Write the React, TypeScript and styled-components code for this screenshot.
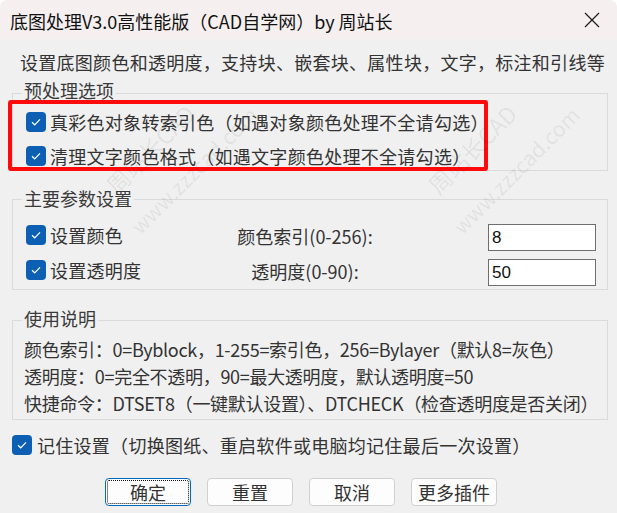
import React from 'react';
import styled, { createGlobalStyle } from 'styled-components';

const GlobalStyle = createGlobalStyle`
  html, body {
    margin: 0;
    padding: 0;
    background: #ffffff;
  }
  body {
    font-family: "Noto Sans CJK SC", "Noto Sans", sans-serif;
  }
`;

const Window = styled.div`
  width: 617px;
  height: 513px;
  background: #f0f0f0;
  border-radius: 8px 8px 0 0;
  overflow: hidden;
  position: relative;
  color: #333333;
`;

const TitleBar = styled.div`
  height: 39px;
  background: #f5f0ef;
  display: flex;
  align-items: center;
  justify-content: space-between;
  padding: 0 16px 0 10px;
`;

const Title = styled.div`
  font-size: 18px;
  line-height: 24px;
  color: #111;
  margin-top: 2px;
`;

const CloseButton = styled.div`
  width: 18px;
  height: 18px;
  display: flex;
  align-items: center;
  justify-content: center;
`;

const Content = styled.div`
  padding: 0 9px 0 12px;
`;

const Description = styled.div`
  margin-top: 11px;
  padding-left: 8px;
  font-size: 18px;
  line-height: 24px;
  letter-spacing: 0.28px;
  white-space: nowrap;
`;

const Group = styled.fieldset<{ $top: number }>`
  margin: ${({ $top }) => $top}px 0 0 0;
  padding: 0;
  border: 1px solid #dadada;
  min-width: 0;
`;

const Legend = styled.legend<{ $pad: number }>`
  margin-left: 9px;
  padding: 0 2px ${({ $pad }) => $pad}px 2px;
  font-size: 18px;
  line-height: 24px;
  color: #3a3a3a;
`;

const Highlight = styled.div`
  margin: -8px 0 -1px -5px;
  width: 480px;
  height: 71px;
  box-sizing: border-box;
  border: 4px solid #ff0a0a;
  border-radius: 3px;
  padding: 7px 0 0 14px;
  display: flex;
  flex-direction: column;
  gap: 12px;
`;

const CheckRow = styled.label<{ $gap?: number }>`
  display: flex;
  align-items: center;
  gap: ${({ $gap = 4 }) => $gap}px;
  height: 22px;
  font-size: 18px;
  line-height: 22px;
  letter-spacing: 0.28px;
  white-space: nowrap;
`;

const Box = styled.span`
  width: 20px;
  height: 20px;
  flex: none;
  border-radius: 4px;
  background: #0d5fb4;
  display: flex;
  align-items: center;
  justify-content: center;
`;

const ParamGrid = styled.div`
  display: grid;
  grid-template-columns: 160px 238px 1fr;
  grid-auto-rows: 27px;
  row-gap: 8px;
  padding: 12px 11px 3px 13px;
`;

const ParamLabel = styled.div`
  font-size: 18px;
  line-height: 22px;
  text-align: center;
  align-self: center;
  white-space: nowrap;
  margin-top: -4px;
`;

const CheckCell = styled.div`
  align-self: start;
`;

const NumberInput = styled.input`
  justify-self: end;
  width: 108px;
  height: 27px;
  box-sizing: border-box;
  border: 1px solid #6e6e6e;
  background: #ffffff;
  padding: 0 3px;
  font-family: "Liberation Sans", Arial, sans-serif;
  font-size: 17px;
  color: #111;
  outline: none;
`;

const Notes = styled.div`
  padding: 2px 0 2px 11px;
  font-size: 18px;
  line-height: 27px;
  letter-spacing: -0.3px;
  white-space: nowrap;
`;

const RememberRow = styled.div`
  margin-top: 14px;
`;

const ButtonRow = styled.div`
  display: flex;
  gap: 16px;
  margin-top: 22px;
  padding-left: 93px;
`;

const Button = styled.button<{ $default?: boolean }>`
  width: 86px;
  height: 28px;
  box-sizing: border-box;
  border: 1px solid ${({ $default }) => ($default ? '#0067c0' : '#d0d0d0')};
  border-radius: 4px;
  background: #fdfdfd;
  font-family: "Noto Sans CJK SC", sans-serif;
  font-size: 18px;
  color: #333;
  padding: 0;
  display: flex;
  align-items: center;
  justify-content: center;
  ${({ $default }) =>
    $default &&
    `
    outline: 1px dotted #111;
    outline-offset: -3px;
  `}
`;

const Watermark = styled.div`
  position: absolute;
  transform: translate(-50%, -50%) rotate(-45deg);
  pointer-events: none;
  color: rgba(0, 0, 0, 0.075);
  font-size: 23px;
  line-height: 46px;
  text-align: center;
  white-space: nowrap;
`;

const WatermarkSub = styled.div`
  padding-left: 32px;
  font-size: 21px;
`;

const Check = () => (
  <Box>
    <svg width="12" height="10" viewBox="0 0 12 10">
      <path d="M2 5.2 L4.7 7.8 L10 2.4" fill="none" stroke="#ffffff" strokeWidth="1.2" />
    </svg>
  </Box>
);

const marks = [
  { x: 166, y: 165 },
  { x: 488, y: 165 },
];

export default function App() {
  return (
    <>
      <GlobalStyle />
      <Window>
        <TitleBar>
          <Title>底图处理V3.0高性能版（CAD自学网）by 周站长</Title>
          <CloseButton>
            <svg width="16" height="16" viewBox="0 0 16 16">
              <path d="M1 1 L15 15 M15 1 L1 15" stroke="#1a1a1a" strokeWidth="1.2" />
            </svg>
          </CloseButton>
        </TitleBar>
        <Content>
          <Description>设置底图颜色和透明度，支持块、嵌套块、属性块，文字，标注和引线等</Description>

          <Group $top={4}>
            <Legend $pad={6}>预处理选项</Legend>
            <Highlight>
              <CheckRow>
                <Check />
                真彩色对象转索引色（如遇对象颜色处理不全请勾选）
              </CheckRow>
              <CheckRow>
                <Check />
                清理文字颜色格式（如遇文字颜色处理不全请勾选）
              </CheckRow>
            </Highlight>
          </Group>

          <Group $top={15}>
            <Legend $pad={2}>主要参数设置</Legend>
            <ParamGrid>
              <CheckCell>
                <CheckRow>
                  <Check />
                  设置颜色
                </CheckRow>
              </CheckCell>
              <ParamLabel>颜色索引(0-256):</ParamLabel>
              <NumberInput defaultValue="8" />
              <CheckCell>
                <CheckRow>
                  <Check />
                  设置透明度
                </CheckRow>
              </CheckCell>
              <ParamLabel>透明度(0-90):</ParamLabel>
              <NumberInput defaultValue="50" />
            </ParamGrid>
          </Group>

          <Group $top={16}>
            <Legend $pad={4}>使用说明</Legend>
            <Notes>
              <div>颜色索引：0=Byblock，1-255=索引色，256=Bylayer（默认8=灰色）</div>
              <div>透明度：0=完全不透明，90=最大透明度，默认透明度=50</div>
              <div>快捷命令：DTSET8（一键默认设置）、DTCHECK（检查透明度是否关闭）</div>
            </Notes>
          </Group>

          <RememberRow>
            <CheckRow $gap={5}>
              <Check />
              记住设置（切换图纸、重启软件或电脑均记住最后一次设置）
            </CheckRow>
          </RememberRow>

          <ButtonRow>
            <Button $default>确定</Button>
            <Button>重置</Button>
            <Button>取消</Button>
            <Button>更多插件</Button>
          </ButtonRow>
        </Content>

        {marks.map((m, i) => (
          <Watermark key={i} style={{ left: m.x, top: m.y }}>
            <div>周站长CAD</div>
            <WatermarkSub>www.zzzcad.com</WatermarkSub>
          </Watermark>
        ))}
      </Window>
    </>
  );
}
